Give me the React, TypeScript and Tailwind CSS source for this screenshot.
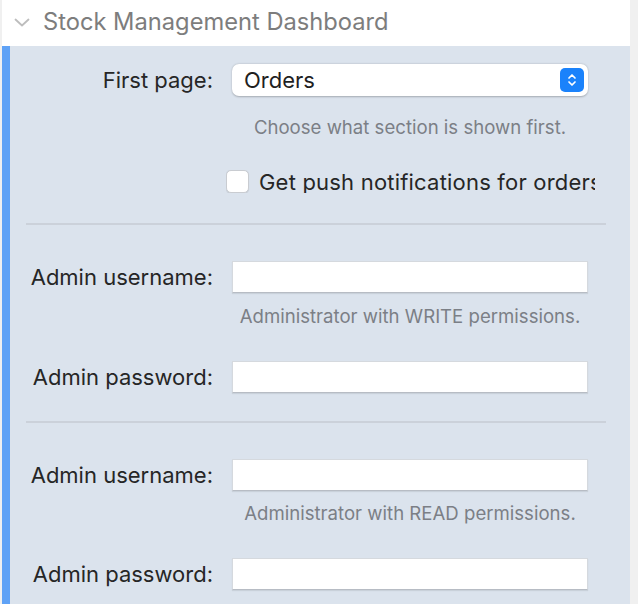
import { useState } from "react";

const font = { fontFamily: "Inter, 'Noto Sans', sans-serif" };

function Field({ label }: { label: string }) {
  return (
    <div className="flex items-center">
      <div className="w-[203px] text-right text-[22px] leading-none text-[#262626]">{label}</div>
      <input
        type="text"
        className="ml-[19px] h-[32px] w-[356px] bg-white border border-[#d5d9de] border-b-[#b7bcc4] shadow-[0_1px_1px_rgba(0,0,0,0.08)] outline-none px-2 text-[18px]"
      />
    </div>
  );
}

function Hint({ text, className }: { text: string; className: string }) {
  return (
    <div className={"ml-[222px] w-[356px] h-[24px] leading-[24px] text-center text-[18.6px] whitespace-nowrap text-[#7b7f86] " + className}>
      {text}
    </div>
  );
}

export default function App() {
  const [push, setPush] = useState(false);

  return (
    <div className="w-[638px] h-[604px] overflow-hidden bg-[#f0f0f0] flex" style={font}>
      <div className="ml-[2px] w-[628px] flex flex-col">
        <div className="h-[46px] bg-white flex items-center pb-[3px]">
          <svg width="16" height="9" viewBox="0 0 16 9" className="ml-[12px] mt-[2px]" fill="none">
            <path d="M1.5 1.5l6.5 6 6.5-6" stroke="#bdbdbd" strokeWidth="1.8" strokeLinecap="round" strokeLinejoin="round" />
          </svg>
          <span className="ml-[13px] text-[23.7px] text-[#7d7d7d]">Stock Management Dashboard</span>
        </div>

        <div className="flex-1 flex bg-[#dbe3ed]">
          <div className="w-[8px] bg-[#5fa2f6]" />
          <div className="flex-1 flex flex-col pt-[18px]">
            <div className="flex items-center">
              <div className="w-[203px] text-right text-[22px] leading-none text-[#262626]">First page:</div>
              <div className="ml-[19px] h-[32px] w-[356px] bg-white rounded-[7px] shadow-[0_0.5px_2px_rgba(0,0,0,0.25)] flex items-center justify-between pl-[12px] pr-[4px]">
                <span className="text-[22px] leading-none text-[#1f1f1f]">Orders</span>
                <div className="w-[24px] h-[24px] rounded-[5px] bg-[#1a82fb] flex items-center justify-center">
                  <svg width="10" height="16" viewBox="0 0 10 16" fill="none">
                    <path d="M2 6l3-3 3 3M2 10l3 3 3-3" stroke="white" strokeWidth="1.7" strokeLinecap="round" strokeLinejoin="round" />
                  </svg>
                </div>
              </div>
            </div>
            <Hint text="Choose what section is shown first." className="mt-[19px]" />

            <div className="mt-[31px] ml-[216px] w-[369px] h-[23px] overflow-hidden whitespace-nowrap flex items-center">
              <button
                onClick={() => setPush(!push)}
                className="w-[23px] h-[23px] shrink-0 rounded-[5px] bg-white border border-[#c9ccd1] shadow-[0_0.5px_1px_rgba(0,0,0,0.1)] flex items-center justify-center"
              >
                {push && (
                  <svg width="13" height="13" viewBox="0 0 13 13" fill="none">
                    <path d="M2 7l3 3 6-7" stroke="#1a82fb" strokeWidth="2" strokeLinecap="round" strokeLinejoin="round" />
                  </svg>
                )}
              </button>
              <span className="ml-[10px] text-[22px] leading-none tracking-[0.2px] text-[#262626]">Get push notifications for orders</span>
            </div>

            <div className="mt-[30px] ml-[16px] w-[580px] h-[2px] bg-[#cbd1da]" />

            <div className="mt-[36px]">
              <Field label="Admin username:" />
            </div>
            <Hint text="Administrator with WRITE permissions." className="mt-[11px]" />
            <div className="mt-[33px]">
              <Field label="Admin password:" />
            </div>

            <div className="mt-[28px] ml-[16px] w-[580px] h-[2px] bg-[#cbd1da]" />

            <div className="mt-[36px]">
              <Field label="Admin username:" />
            </div>
            <Hint text="Administrator with READ permissions." className="mt-[10px]" />
            <div className="mt-[33px]">
              <Field label="Admin password:" />
            </div>
          </div>
        </div>
      </div>
    </div>
  );
}
